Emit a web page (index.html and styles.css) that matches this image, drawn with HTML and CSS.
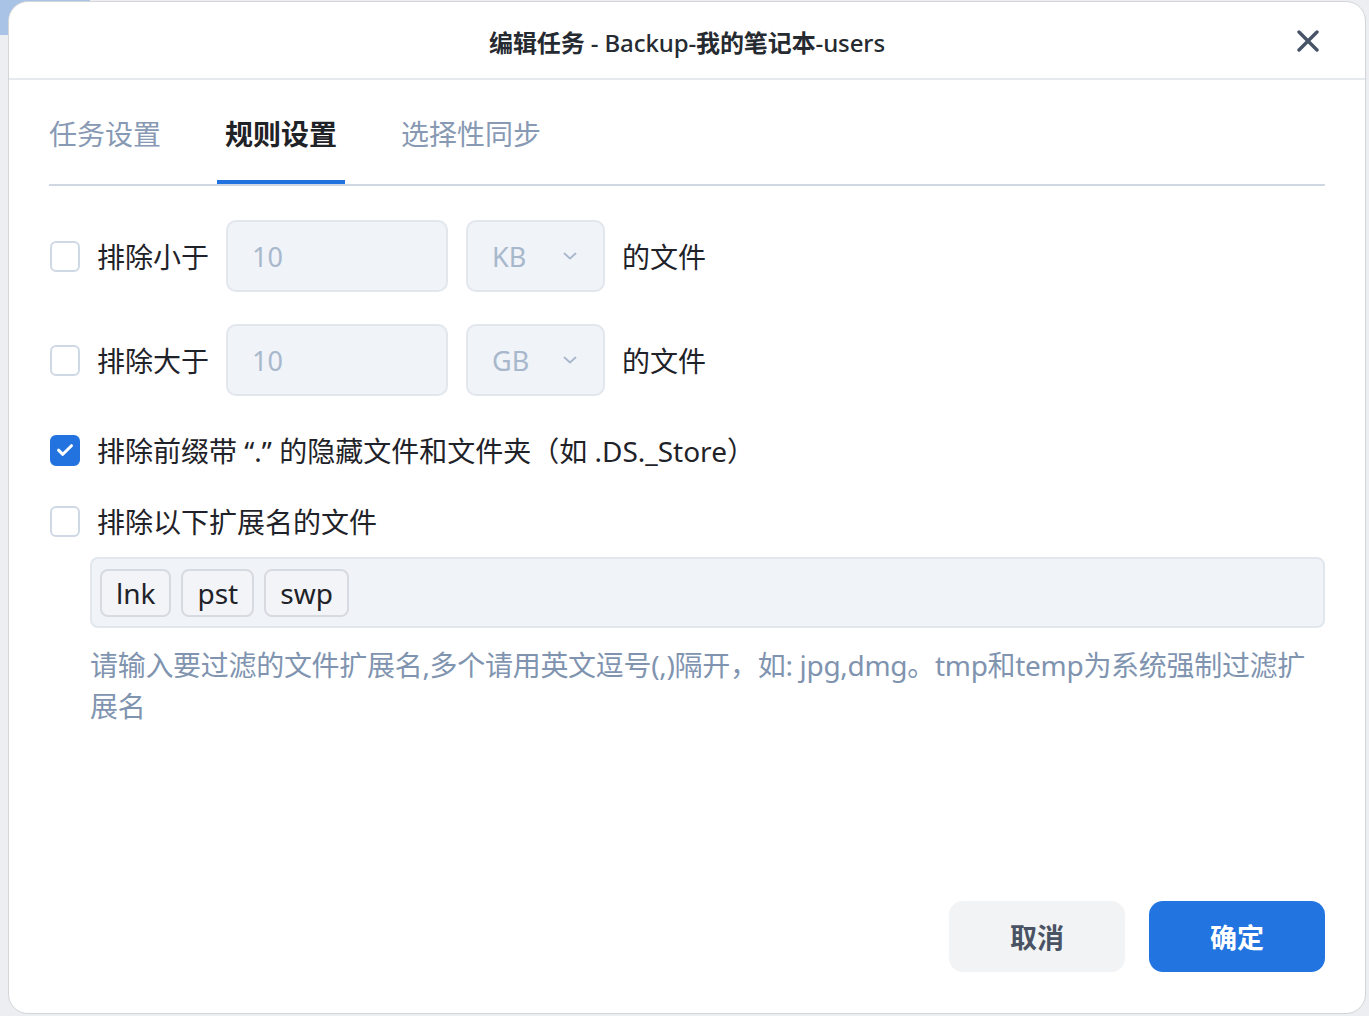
FILE: index.html
```html
<!DOCTYPE html>
<html lang="zh-CN">
<head>
<meta charset="utf-8">
<title>编辑任务</title>
<link rel="stylesheet" href="styles.css">
</head>
<body>
<div class="backdrop-accent"></div>
<div class="dialog">
  <header class="dialog-header">
    <span class="spacer"></span>
    <h1 class="title"><b>编辑任务</b> - Backup-<b>我的笔记本</b>-users</h1>
    <button class="close" aria-label="关闭">
      <svg width="22" height="22" viewBox="0 0 22 22"><path d="M2 2 L20 20 M20 2 L2 20" stroke="#475467" stroke-width="3.4" stroke-linecap="round" fill="none"/></svg>
    </button>
  </header>
  <main class="dialog-body">
    <nav class="tabs">
      <div class="tab">任务设置</div>
      <div class="tab active">规则设置</div>
      <div class="tab">选择性同步</div>
    </nav>
    <div class="form">
      <div class="row row-input r1">
        <span class="checkbox"></span>
        <span class="label">排除小于</span>
        <div class="input">10</div>
        <div class="select"><span>KB</span>
          <svg width="14" height="8" viewBox="0 0 14 8"><path d="M1.5 1.5 L7 6.5 L12.5 1.5" stroke="#a8b8cc" stroke-width="1.8" fill="none" stroke-linecap="round" stroke-linejoin="round"/></svg>
        </div>
        <span class="label">的文件</span>
      </div>
      <div class="row row-input r2">
        <span class="checkbox"></span>
        <span class="label">排除大于</span>
        <div class="input">10</div>
        <div class="select"><span>GB</span>
          <svg width="14" height="8" viewBox="0 0 14 8"><path d="M1.5 1.5 L7 6.5 L12.5 1.5" stroke="#a8b8cc" stroke-width="1.8" fill="none" stroke-linecap="round" stroke-linejoin="round"/></svg>
        </div>
        <span class="label">的文件</span>
      </div>
      <div class="row row-check r3">
        <span class="checkbox checked">
          <svg width="18" height="14" viewBox="0 0 18 14"><path d="M2.5 7.2 L6.8 11.3 L15.5 2.7" stroke="#fff" stroke-width="3" fill="none" stroke-linecap="round" stroke-linejoin="round"/></svg>
        </span>
        <span class="label">排除前缀带 “.” 的隐藏文件和文件夹（如 .DS._Store）</span>
      </div>
      <div class="row row-check r4">
        <span class="checkbox"></span>
        <span class="label">排除以下扩展名的文件</span>
      </div>
      <div class="tagbox">
        <span class="tag">lnk</span>
        <span class="tag">pst</span>
        <span class="tag">swp</span>
      </div>
      <p class="hint">请输入要过滤的文件扩展名,多个请用英文逗号(,)隔开，如: jpg,dmg。tmp和temp为系统强制过滤扩展名</p>
    </div>
  </main>
  <footer class="dialog-footer">
    <button class="btn btn-cancel">取消</button>
    <button class="btn btn-ok">确定</button>
  </footer>
</div>
</body>
</html>
```
FILE: styles.css
```css
* { box-sizing: border-box; }
html, body {
  margin: 0;
  padding: 0;
}
body {
  width: 1369px;
  height: 1016px;
  overflow: hidden;
  background: #eceef1;
  font-family: "Noto Sans", "Noto Sans CJK SC", sans-serif;
  color: #1f2329;
  position: relative;
}
.backdrop-accent {
  position: absolute;
  left: 0;
  top: 0;
  width: 90px;
  height: 35px;
  background: #a9c3e6;
}
.dialog {
  position: relative;
  margin: 1px 0 0 8px;
  width: 1358px;
  height: 1013px;
  background: #fff;
  border: 1px solid #d3d5d8;
  border-radius: 20px;
  display: flex;
  flex-direction: column;
}
.dialog-header {
  height: 78px;
  border-bottom: 2px solid #e6e9ed;
  display: grid;
  grid-template-columns: 1fr auto 1fr;
  align-items: center;
}
.title {
  margin: 0;
  font-size: 24px;
  font-weight: 500;
  color: #262a31;
  letter-spacing: -0.1px;
  padding-top: 2px;
}
.title b { font-weight: 700; }
.close {
  justify-self: end;
  margin-right: 46px;
  margin-top: 2px;
  width: 22px;
  height: 22px;
  padding: 0;
  border: 0;
  background: none;
  display: flex;
}
.dialog-body {
  padding: 0 40px;
}
.tabs {
  display: flex;
  gap: 48px;
  border-bottom: 2px solid #cfd7e2;
}
.tab {
  height: 104px;
  padding: 6px 8px 0;
  margin-left: -8px;
  margin-right: -8px;
  display: flex;
  align-items: center;
  font-size: 28px;
  color: #8799b3;
  border-bottom: 4px solid transparent;
}
.tab + .tab { margin-left: 8px; }
.tab.active {
  color: #1f2226;
  font-weight: 700;
  border-bottom-color: #2272df;
}
.form {
  display: flex;
  flex-direction: column;
}
.row {
  display: flex;
  align-items: center;
  gap: 17px;
}
.row-input { height: 70px; }
.row-check { height: 40px; }
.r1 { margin-top: 35px; }
.r2 { margin-top: 34px; }
.r3 { margin-top: 35px; }
.r4 { margin-top: 31px; }
.checkbox {
  width: 30px;
  height: 31px;
  flex: none;
  margin-left: 1px;
  border: 2px solid #cfd9e5;
  border-radius: 6px;
  background: #fff;
  display: flex;
  align-items: center;
  justify-content: center;
}
.checkbox.checked {
  background: #2272df;
  border-color: #2272df;
}
.label {
  font-size: 28px;
  color: #1f2329;
  white-space: nowrap;
}
.input {
  width: 222px;
  height: 72px;
  background: #f0f3f8;
  border: 2px solid #e2e7ee;
  border-radius: 10px;
  padding-left: 24px;
  display: flex;
  align-items: center;
  font-size: 27px;
  color: #a8b8cc;
}
.select {
  width: 139px;
  height: 72px;
  margin-left: 1px;
  background: #f0f3f8;
  border: 2px solid #e2e7ee;
  border-radius: 10px;
  padding: 0 26px 0 24px;
  display: flex;
  align-items: center;
  justify-content: space-between;
  font-size: 27px;
  color: #a8b8cc;
}
.tagbox {
  margin: 16px 0 0 41px;
  height: 71px;
  background: #f0f3f8;
  border: 2px solid #e2e7ee;
  border-radius: 8px;
  padding: 0 8px;
  display: flex;
  align-items: center;
  gap: 10px;
}
.tag {
  height: 48px;
  padding: 0 14px;
  border: 2px solid #d7dbe1;
  border-radius: 8px;
  background: #f3f4f7;
  display: flex;
  align-items: center;
  font-size: 28px;
  color: #1f2329;
}
.hint {
  margin: 17px 0 0 41px;
  font-size: 28px;
  line-height: 41px;
  color: #8094b0;
  letter-spacing: -0.3px;
}
.dialog-footer {
  margin-top: auto;
  padding: 0 40px 41px;
  display: flex;
  justify-content: flex-end;
  gap: 24px;
}
.btn {
  width: 176px;
  height: 71px;
  border: 0;
  border-radius: 14px;
  font-family: "Noto Sans CJK SC", "Noto Sans", sans-serif;
  font-size: 27px;
  font-weight: 700;
}
.btn-cancel {
  background: #f2f3f5;
  color: #4a5363;
}
.btn-ok {
  background: #2274e0;
  color: #fff;
}
```
